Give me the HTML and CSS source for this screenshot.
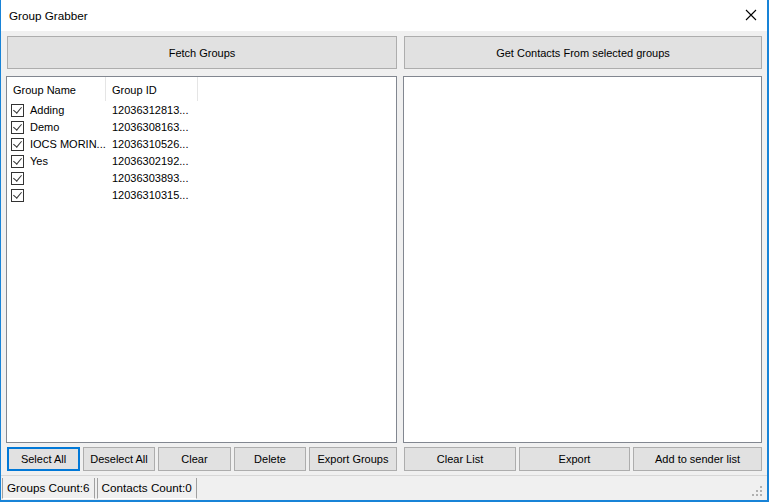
FILE: index.html
```html
<!DOCTYPE html>
<html lang="en">
<head>
    <meta charset="UTF-8">
    <meta name="viewport" content="width=device-width, initial-scale=1.0">
    <title>Group Grabber</title>
    <link rel="stylesheet" href="styles.css">
</head>
<body>
    <div class="window">
        <div class="titlebar">
            <span class="title">Group Grabber</span>
            <span class="close">
                <svg width="12" height="12" viewBox="0 0 12 12">
                    <path d="M1 1 L11 11 M11 1 L1 11" stroke="#000" stroke-width="1.1" fill="none"/>
                </svg>
            </span>
        </div>

        <div class="content">
            <div class="column">
                <button class="big">Fetch Groups</button>
                <div class="list">
                    <div class="header">
                        <div class="col name">Group Name</div>
                        <div class="col id">Group ID</div>
                    </div>
                    <div class="row"><span class="cell name"><span class="check"></span>Adding</span><span class="cell id">12036312813...</span></div>
                    <div class="row"><span class="cell name"><span class="check"></span>Demo</span><span class="cell id">12036308163...</span></div>
                    <div class="row"><span class="cell name"><span class="check"></span>IOCS MORIN...</span><span class="cell id">12036310526...</span></div>
                    <div class="row"><span class="cell name"><span class="check"></span>Yes</span><span class="cell id">12036302192...</span></div>
                    <div class="row"><span class="cell name"><span class="check"></span></span><span class="cell id">12036303893...</span></div>
                    <div class="row"><span class="cell name"><span class="check"></span></span><span class="cell id">12036310315...</span></div>
                </div>
                <div class="actions">
                    <button class="small focused w73">Select All</button>
                    <button class="small w72">Deselect All</button>
                    <button class="small w73">Clear</button>
                    <button class="small w72">Delete</button>
                    <button class="small w88">Export Groups</button>
                </div>
            </div>

            <div class="column">
                <button class="big">Get Contacts From selected groups</button>
                <div class="list"></div>
                <div class="actions">
                    <button class="small w112">Clear List</button>
                    <button class="small w111">Export</button>
                    <button class="small w129">Add to sender list</button>
                </div>
            </div>
        </div>

        <div class="statusbar">
            <span class="panel">Groups Count:6</span>
            <span class="panel">Contacts Count:0</span>
            <span class="grip">
                <svg width="12" height="12" viewBox="0 0 12 12">
                    <rect x="8" y="0" width="2" height="2" fill="#b0b0b0"/>
                    <rect x="4" y="4" width="2" height="2" fill="#b0b0b0"/>
                    <rect x="8" y="4" width="2" height="2" fill="#b0b0b0"/>
                    <rect x="0" y="8" width="2" height="2" fill="#b0b0b0"/>
                    <rect x="4" y="8" width="2" height="2" fill="#b0b0b0"/>
                    <rect x="8" y="8" width="2" height="2" fill="#b0b0b0"/>
                </svg>
            </span>
        </div>
    </div>
</body>
</html>
```

FILE: styles.css
```css
* {
    box-sizing: border-box;
    margin: 0;
    padding: 0;
}

body {
    font-family: "Liberation Sans", Arial, sans-serif;
    font-size: 11px;
    color: #000;
    background-color: #fff;
}

.window {
    width: 769px;
    height: 502px;
    background-color: #f0f0f0;
    border-left: 1px solid #1883d7;
    border-right: 2px solid #1883d7;
    border-bottom: 2px solid #1883d7;
    display: flex;
    flex-direction: column;
}

.titlebar {
    height: 31px;
    background-color: #fff;
    display: flex;
    align-items: center;
    justify-content: space-between;
    padding: 0 10px 0 8px;
    flex-shrink: 0;
}

.title {
    font-size: 11.7px;
    padding-bottom: 1px;
}

.close {
    display: flex;
    padding-bottom: 2px;
}

.content {
    display: grid;
    grid-template-columns: 391px 359px;
    column-gap: 6px;
    padding: 5px 0 0 5px;
    height: 441px;
}

.column {
    display: flex;
    flex-direction: column;
}

button {
    font-family: inherit;
    font-size: 11px;
    color: #000;
    background-color: #e1e1e1;
    border: 1px solid #adadad;
    display: flex;
    align-items: center;
    justify-content: center;
    white-space: nowrap;
}

button.big {
    height: 33px;
    margin-left: 1px;
}

.list {
    margin-top: 7px;
    height: 367px;
    background-color: #fff;
    border: 1px solid #828790;
}

.header {
    display: flex;
    height: 24px;
}

.header .col {
    display: flex;
    align-items: center;
    padding-left: 6px;
    padding-top: 2px;
    border-right: 1px solid #e5e5e5;
    white-space: nowrap;
}

.header .name {
    width: 99px;
}

.header .id {
    width: 92px;
}

.row {
    display: flex;
    height: 17px;
    align-items: center;
    padding-top: 1px;
    white-space: nowrap;
}

.cell.name {
    width: 99px;
    display: flex;
    align-items: center;
    padding-left: 4px;
    overflow: hidden;
}

.cell.id {
    padding-left: 6px;
}

.check {
    width: 13px;
    height: 13px;
    border: 1px solid #333;
    margin-right: 6px;
    position: relative;
    flex-shrink: 0;
}

.check::after {
    content: '';
    position: absolute;
    left: 3px;
    top: 0px;
    width: 4px;
    height: 7px;
    border-right: 1.3px solid #333;
    border-bottom: 1.3px solid #333;
    transform: rotate(40deg);
}

.actions {
    display: flex;
    margin-top: 4px;
    padding-left: 1px;
    gap: 3px;
}

button.small {
    height: 24px;
    flex-shrink: 0;
}

button.focused {
    border: 2px solid #0078d7;
}

.w72 { width: 72px; }
.w73 { width: 73px; }
.w88 { width: 88px; }
.w111 { width: 111px; }
.w112 { width: 112px; }
.w129 { width: 129px; }

.statusbar {
    flex: 1;
    border-top: 1px solid #d7d7d7;
    margin-top: 3px;
    display: flex;
    align-items: center;
    padding: 0 0 0 1px;
    position: relative;
}

.panel {
    height: 21px;
    display: flex;
    align-items: center;
    padding: 0 4px;
    border-left: 1px solid #a0a0a0;
    border-right: 1px solid #a0a0a0;
    border-bottom: 1px solid #fff;
    margin-right: 2px;
    font-size: 11.7px;
    white-space: nowrap;
}

.grip {
    position: absolute;
    right: 3px;
    bottom: 2px;
    display: flex;
}
```
